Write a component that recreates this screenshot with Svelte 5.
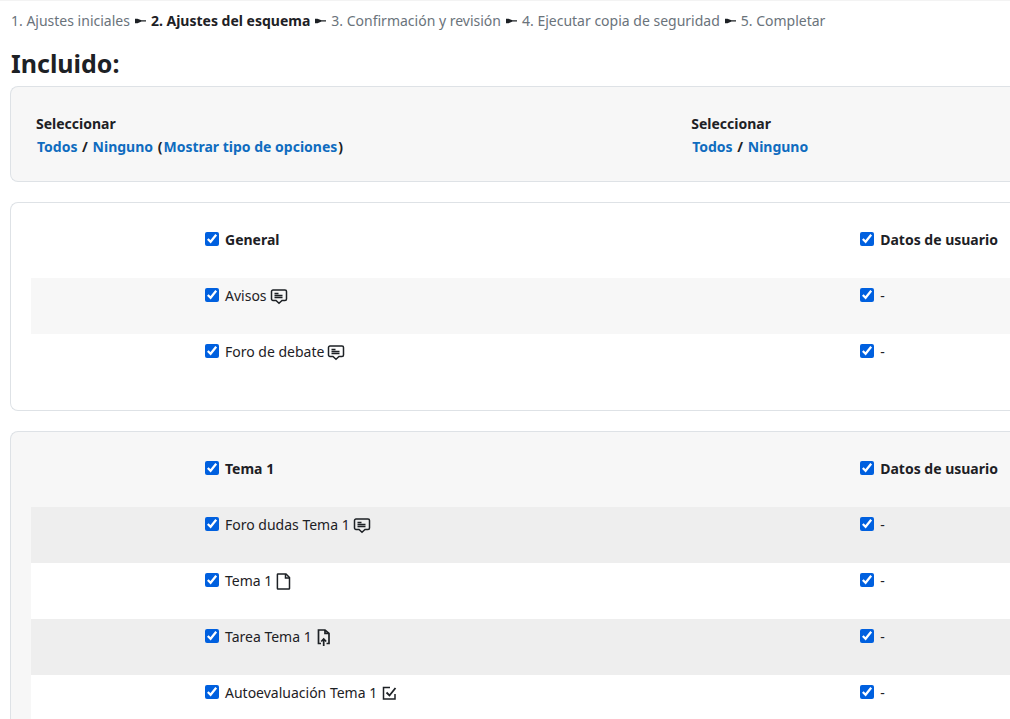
<script>
  const steps = [
    '1. Ajustes iniciales',
    '2. Ajustes del esquema',
    '3. Confirmación y revisión',
    '4. Ejecutar copia de seguridad',
    '5. Completar'
  ]
  const current = 1

  let sections = $state([
    {
      title: 'General',
      checked: true,
      userdata: true,
      items: [
        { name: 'Avisos', icon: 'forum', checked: true, userdata: true },
        { name: 'Foro de debate', icon: 'forum', checked: true, userdata: true }
      ]
    },
    {
      title: 'Tema 1',
      checked: true,
      userdata: true,
      items: [
        { name: 'Foro dudas Tema 1', icon: 'forum', checked: true, userdata: true },
        { name: 'Tema 1', icon: 'file', checked: true, userdata: true },
        { name: 'Tarea Tema 1', icon: 'assign', checked: true, userdata: true },
        { name: 'Autoevaluación Tema 1', icon: 'quiz', checked: true, userdata: true }
      ]
    }
  ])

  const setAll = (event, key, value) => {
    event.preventDefault()
    for (const section of sections) {
      section[key] = value
      for (const item of section.items) item[key] = value
    }
  }
</script>

{#snippet icon(name)}
  <svg class="icon" viewBox="0 0 18 18" aria-hidden="true">
    {#if name === 'forum'}
      <path d="M3 3h12a1.5 1.5 0 0 1 1.5 1.500v7.500a1.500 1.500 0 0 1-1.500 1.500h-3l-3 2.700-3-2.700H3a1.500 1.500 0 0 1-1.500-1.500V4.500A1.500 1.500 0 0 1 3 3z" />
      <path d="M4.500 6.500h4M4.500 8.500h8M4.500 10.500h8" />
    {:else if name === 'file'}
      <path d="M3.500 2h7.500l3.500 3.500v11a.6.6 0 0 1-.6.6H3a.6.6 0 0 1-.6-.6V2.600a.6.6 0 0 1 .6-.6z" />
      <path d="M10.500 2v4h4" />
    {:else if name === 'assign'}
      <path d="M6 15.500H3.500V2H10l4 3.500v10h-2.500" stroke-width="1.700" />
      <path d="M10 2v3.500h4M8.700 18v-6.500M6.200 13.500l2.500-2.500 2.500 2.500" stroke-width="1.700" />
    {:else}
      <path d="M10 3.500H3.500V15H15v-5" />
      <path d="m6.500 8.500 3 3 6-7.500" stroke-width="1.800" />
    {/if}
  </svg>
{/snippet}

<main>
  <nav>
    {#each steps as step, i}
      {#if i > 0}
        <svg class="arrow" viewBox="0 0 12 6" aria-hidden="true"><path d="M.5.7h2.500L7 2.200h4.500v1.300H7L3 5.300H.5z" /></svg>
      {/if}
      <span class:current={i === current}>{step}</span>
    {/each}
  </nav>

  <h1>Incluido:</h1>

  <div class="card shaded">
    <div class="row select">
      <div class="cell">
        Seleccionar<br />
        <a href="#all" onclick={(e) => setAll(e, 'checked', true)}>Todos</a> /
        <a href="#none" onclick={(e) => setAll(e, 'checked', false)}>Ninguno</a>
        (<a href="#types">Mostrar tipo de opciones</a>)
      </div>
      <div class="cell">
        Seleccionar<br />
        <a href="#alldata" onclick={(e) => setAll(e, 'userdata', true)}>Todos</a> /
        <a href="#nodata" onclick={(e) => setAll(e, 'userdata', false)}>Ninguno</a>
      </div>
    </div>
  </div>

  {#each sections as section, i}
    <section class="card" class:shaded={i % 2 === 1}>
      <div class="row title">
        <label><input type="checkbox" bind:checked={section.checked} />{section.title}</label>
        <label><input type="checkbox" bind:checked={section.userdata} />Datos de usuario</label>
      </div>
      {#each section.items as item}
        <div class="row item">
          <label><input type="checkbox" bind:checked={item.checked} />{item.name}{@render icon(item.icon)}</label>
          <label><input type="checkbox" bind:checked={item.userdata} />-</label>
        </div>
      {/each}
    </section>
  {/each}
</main>

<style>
  :global(body) {
    margin: 0;
    background: #fff;
    color: #1d2125;
    font: 14px/23px 'Noto Sans', 'Open Sans', sans-serif;
  }
  :global(html) {
    scrollbar-width: none;
  }
  main {
    border-top: 1px solid #f3f3f3;
    padding: 8px 0 0 10px;
  }
  nav {
    display: flex;
    align-items: center;
    gap: 4px;
    padding-left: 1px;
    color: #6a737b;
    white-space: nowrap;
  }
  .current {
    color: #1d2125;
    font-weight: 700;
  }
  .arrow {
    width: 13px;
    height: 6px;
    fill: #1d2125;
  }
  h1 {
    margin: 15px 0 7px 1px;
    font-size: 25px;
    line-height: 32px;
    font-weight: 700;
  }
  .card {
    margin-bottom: 20px;
    padding: 19px 0 20px 20px;
    border: 1px solid #dee2e6;
    border-right: none;
    border-radius: 8px 0 0 8px;
  }
  .shaded {
    background: #f7f7f7;
  }
  .row {
    display: grid;
    grid-template-columns: 87fr 43fr;
    box-sizing: border-box;
    min-height: 56px;
    padding-top: 6px;
  }
  .cell {
    padding-left: 5px;
  }
  .select,
  .title {
    font-weight: 700;
  }
  .select {
    min-height: 55px;
  }
  a {
    padding: 0 1px;
    color: #0f6cbf;
    text-decoration: none;
  }
  label {
    display: flex;
    align-items: center;
    align-self: start;
    height: 23px;
    padding-left: 174px;
    white-space: nowrap;
  }
  input {
    width: 14px;
    height: 14px;
    margin: 0 6px 2px 0;
    accent-color: #0060df;
  }
  .item:nth-child(even) {
    background: #f7f7f7;
  }
  .item:nth-child(odd) {
    background: #fff;
  }
  .shaded .item:nth-child(even) {
    background: #eee;
  }
  .icon {
    width: 18px;
    height: 18px;
    margin-left: 3px;
    fill: none;
    stroke: #1d2125;
    stroke-width: 1.5;
  }
</style>
